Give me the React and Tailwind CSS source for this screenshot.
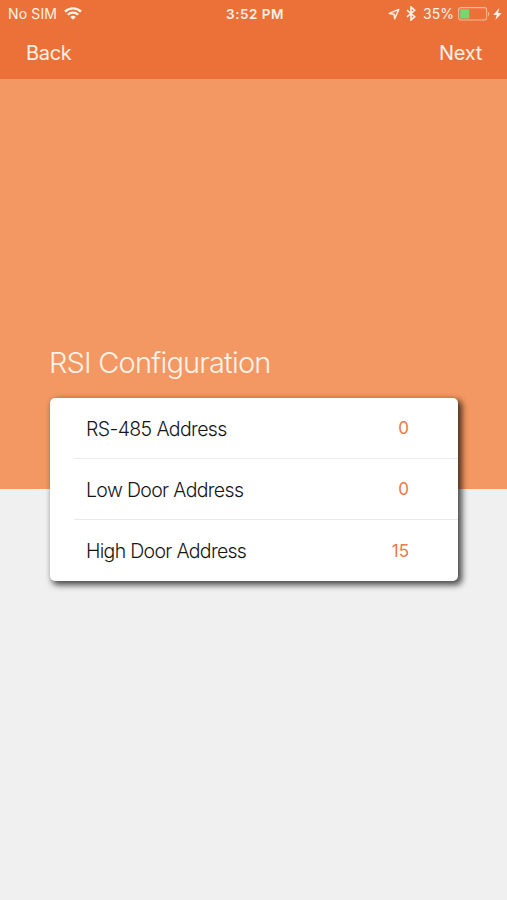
const rows = [
  { label: "RS-485 Address", value: "0", labelStyle: "top-px tracking-[-0.62px]" },
  { label: "Low Door Address", value: "0", labelStyle: "top-px tracking-[-0.66px]" },
  { label: "High Door Address", value: "15", labelStyle: "top-0 tracking-[-0.69px]" },
];

export default function App() {
  return (
    <div className="flex h-[900px] w-full flex-col overflow-hidden bg-[#f0f0f0] font-['Inter',sans-serif]">
      <header className="h-[79px] shrink-0 bg-[#ec7138] text-[#fff1e6]">
        <StatusBar />
        <nav className="flex h-[38px] items-start justify-between pr-[25px] pl-[26px] text-[20px] leading-6 tracking-[-0.3px]">
          <button type="button">Back</button>
          <button type="button">Next</button>
        </nav>
      </header>

      <section className="flex h-[410px] shrink-0 flex-col bg-[#f39863] px-[50px] pt-[265px]">
        <h1 className="-ml-px h-[54px] shrink-0 text-[29px] leading-[38px] font-light tracking-[-0.8px] whitespace-nowrap text-[#fff3e8]">
          RSI Configuration
        </h1>
        <SettingsCard />
      </section>
    </div>
  );
}

function StatusBar() {
  return (
    <div className="grid h-[41px] grid-cols-[1fr_auto_1fr] items-start pt-[5px] pr-[5px] pl-[8px] text-[14px] leading-[18px]">
      <div className="flex items-center gap-[7px]">
        <span className="tracking-[0.15px]">No SIM</span>
        <WifiIcon />
      </div>
      <span className="text-[13.5px] font-semibold tracking-[0.5px]">3:52 PM</span>
      <div className="flex items-center justify-end">
        <LocationIcon />
        <BluetoothIcon />
        <span className="mr-[4px] ml-[7px]">35%</span>
        <BatteryIcon />
        <BoltIcon />
      </div>
    </div>
  );
}

function SettingsCard() {
  return (
    <div className="h-[183px] w-[408px] shrink-0 rounded-[5px] bg-white shadow-[3px_3px_6px_1px_rgba(0,0,0,0.7)]">
      {rows.map((row, index) => (
        <div
          key={row.label}
          className={[
            "ml-6 flex h-[61px] items-center justify-between pr-[49px] pl-3",
            index < rows.length - 1 ? "border-b border-[#e9e9e9]" : "",
          ].join(" ")}
        >
          <span
            className={[
              "relative text-[19.5px] leading-6 font-light whitespace-nowrap text-[#161616]",
              row.labelStyle,
            ].join(" ")}
          >
            {row.label}
          </span>
          <span className="text-[17px] leading-6 text-[#e8794a]">{row.value}</span>
        </div>
      ))}
    </div>
  );
}

function WifiIcon() {
  return (
    <svg className="-mt-px" width="18" height="13" viewBox="0 0 18 13" fill="none" stroke="currentColor">
      <path d="M1 4.7a11.3 11.3 0 0 1 16 0" strokeWidth="2.4" />
      <path d="M3.8 7.8a7.4 7.4 0 0 1 10.4 0" strokeWidth="2.2" />
      <path d="M9 12.8 6.2 10a4 4 0 0 1 5.6 0z" fill="currentColor" stroke="none" />
    </svg>
  );
}

function LocationIcon() {
  return (
    <svg className="-mt-px" width="12" height="12" viewBox="0 0 12 12" fill="none" stroke="currentColor">
      <path d="M10.8 1.4 1.3 5.4l4.7.8.7 4.5z" strokeWidth="1.5" strokeLinejoin="round" />
    </svg>
  );
}

function BluetoothIcon() {
  return (
    <svg className="-mt-px ml-[6px]" width="10" height="15" viewBox="0 0 10 15" fill="none" stroke="currentColor">
      <path d="M1 4.2 8.7 10.7 5 14V1l3.7 3.3L1 10.8" strokeWidth="1.6" />
    </svg>
  );
}

function BatteryIcon() {
  return (
    <svg className="-mt-px" width="32" height="14" viewBox="0 0 32 14" fill="none">
      <rect x="0.6" y="0.6" width="28" height="12.4" rx="2.4" stroke="#f8b893" strokeWidth="1.1" />
      <rect x="2.2" y="2.2" width="9" height="9.3" rx="0.8" fill="#76d672" />
      <path d="M30 4.7c1.7.7 1.7 3.8 0 4.5z" fill="#f8b893" />
    </svg>
  );
}

function BoltIcon() {
  return (
    <svg className="-mt-px ml-[3px]" width="9" height="12" viewBox="0 0 9 12" fill="currentColor">
      <path d="M6.3 0 .2 6.9h3.5L2.4 12l6.3-7.1H5.1z" />
    </svg>
  );
}
